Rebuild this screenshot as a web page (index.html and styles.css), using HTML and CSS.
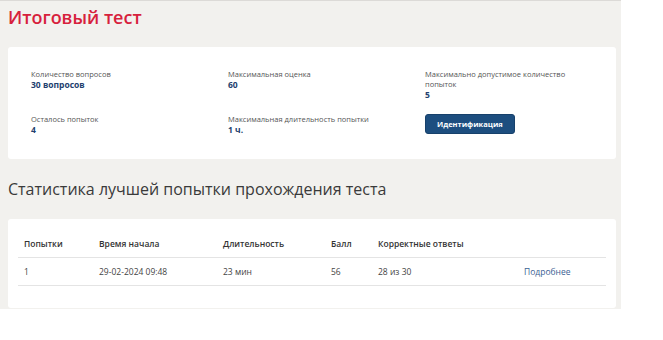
FILE: index.html
```html
<!DOCTYPE html>
<html lang="ru">
<head>
    <meta charset="UTF-8">
    <title>Итоговый тест</title>
    <link rel="stylesheet" href="styles.css">
</head>
<body>
    <div class="page">
        <h1 class="page-title">Итоговый тест</h1>

        <!-- Сведения о тесте -->
        <div class="card info-card">
            <div class="info-item">
                <div class="info-label">Количество вопросов</div>
                <div class="info-value">30 вопросов</div>
            </div>
            <div class="info-item">
                <div class="info-label">Максимальная оценка</div>
                <div class="info-value">60</div>
            </div>
            <div class="info-item">
                <div class="info-label">Максимально допустимое количество попыток</div>
                <div class="info-value">5</div>
            </div>
            <div class="info-item">
                <div class="info-label">Осталось попыток</div>
                <div class="info-value">4</div>
            </div>
            <div class="info-item">
                <div class="info-label">Максимальная длительность попытки</div>
                <div class="info-value">1 ч.</div>
            </div>
            <div class="info-item">
                <button class="ident-button">Идентификация</button>
            </div>
        </div>

        <h2 class="section-title">Статистика лучшей попытки прохождения теста</h2>

        <!-- Таблица попыток -->
        <div class="card stats-card">
            <table class="stats-table">
                <colgroup>
                    <col class="col-attempt">
                    <col class="col-start">
                    <col class="col-duration">
                    <col class="col-score">
                    <col class="col-correct">
                    <col class="col-link">
                </colgroup>
                <thead>
                    <tr>
                        <th>Попытки</th>
                        <th>Время начала</th>
                        <th>Длительность</th>
                        <th>Балл</th>
                        <th>Корректные ответы</th>
                        <th></th>
                    </tr>
                </thead>
                <tbody>
                    <tr>
                        <td>1</td>
                        <td>29-02-2024 09:48</td>
                        <td>23 мин</td>
                        <td>56</td>
                        <td>28 из 30</td>
                        <td><a class="details-link" href="#">Подробнее</a></td>
                    </tr>
                </tbody>
            </table>
        </div>
    </div>
</body>
</html>
```

FILE: styles.css
```css
body {
    margin: 0;
    background-color: #ffffff;
    font-family: "Open Sans", "Noto Sans", sans-serif;
    color: #333333;
}
.page {
    width: 608px;
    padding: 0 5px 1px 8px;
    background-color: #f2f1ee;
    border-top: 1px solid #dcdad7;
}
.page-title {
    margin: 0;
    padding-top: 3px;
    font-size: 18px;
    line-height: 26px;
    font-weight: 600;
    color: #d7213c;
}
.card {
    background-color: #ffffff;
    border-radius: 3px;
}
.info-card {
    margin-top: 17px;
    padding: 22px 0 24px 23px;
    display: grid;
    grid-template-columns: repeat(3, 197px);
    row-gap: 14px;
    align-items: start;
}
.info-item {
    width: 160px;
}
.info-label {
    font-size: 7.5px;
    line-height: 10px;
    color: #555555;
}
.info-value {
    font-size: 8.5px;
    line-height: 11px;
    font-weight: 700;
    color: #22406e;
}
.ident-button {
    display: block;
    height: 20px;
    padding: 0 11px;
    font-family: "Open Sans", "Noto Sans", sans-serif;
    font-size: 7.5px;
    font-weight: 700;
    color: #ffffff;
    background-color: #1d4e7f;
    border: 1px solid #17416b;
    border-radius: 3px;
}
.section-title {
    margin: 0;
    padding: 20px 0 19px;
    font-size: 16px;
    line-height: 21px;
    font-weight: 400;
    color: #3a3a3a;
}
.stats-card {
    padding: 11px 10px 22px;
}
.stats-table {
    width: 588px;
    table-layout: fixed;
    border-collapse: collapse;
    font-size: 8.5px;
}
.col-attempt { width: 75px; }
.col-start { width: 124px; }
.col-duration { width: 108px; }
.col-score { width: 47px; }
.col-correct { width: 146px; }
.col-link { width: 88px; }
.stats-table th,
.stats-table td {
    height: 27px;
    padding: 0 6px;
    text-align: left;
    border-bottom: 1px solid #e4e4e4;
}
.stats-table th {
    font-weight: 600;
    color: #333333;
}
.stats-table td {
    color: #444444;
}
.details-link {
    color: #3b6193;
    text-decoration: none;
}
```
